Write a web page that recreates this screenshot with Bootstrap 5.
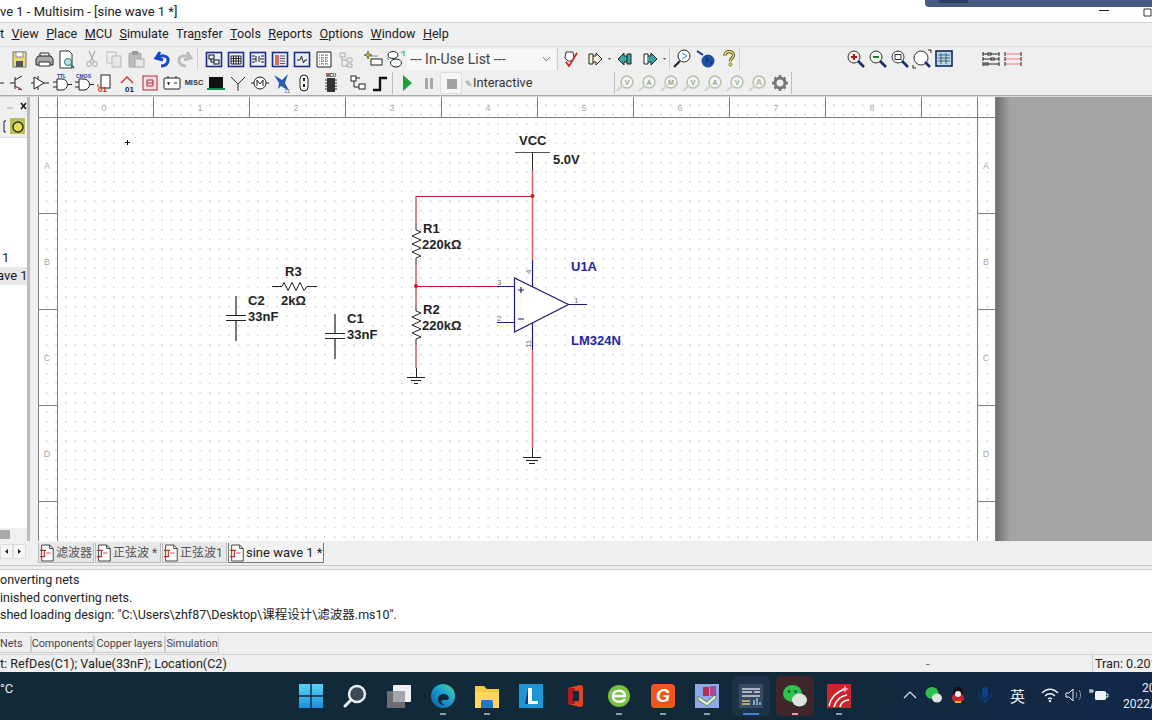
<!DOCTYPE html>
<html lang="en">
<head>
    <meta charset="UTF-8">
    <meta name="viewport" content="width=device-width, initial-scale=1.0">
    <title>Multisim - sine wave 1</title>
    <link href="https://cdn.jsdelivr.net/npm/bootstrap@5.3.0/dist/css/bootstrap.min.css" rel="stylesheet">
    <style>
        body { font-family: Roboto, "Noto Sans CJK SC", sans-serif; font-size: 13px; color: #222; background: #f0f0f0; width: 1152px; height: 720px; overflow: hidden; line-height: 1; }
        .title-row { height: 23px; background: #fff; font-size: 13px; border-bottom: 1px solid #d0d0d0; white-space: nowrap; position: relative; padding-top: 1px; }
        .accent-strip { position: absolute; top: 0; left: 925px; right: 0; height: 7px; background: #47597f; border-bottom-left-radius: 4px; }
        .accent-strip i { display: block; width: 29px; height: 3px; margin-left: 14px; background: #2f3f63; }
        .win-btns { position: absolute; right: 0; top: 6px; }
        .menu-row { height: 24px; background: #f0eff0; border-bottom: 1px solid #dcdcdc; font-size: 12.6px; white-space: nowrap; }
        .menu-row span { margin-right: 7.4px; }
        .tool-row { height: 24px; background: #f0eff0; }
        .tool-row svg { flex: none; display: block; }
        .ti { width: 22px; height: 22px; }
        .tool-sep { width: 1px; height: 22px; background: #cfcfcf; flex: none; }
        .tool-sep2 { width: 1px; height: 22px; background: #bdbdbd; flex: none; }
        .pad1 { margin-left: 1px; } .pad2 { margin-left: 2px; } .pad3 { margin-left: 3px; } .pad4 { margin-left: 4px; } .pad5 { margin-left: 5px; }
        .pad25 { margin-left: 25px; } .pad56 { margin-left: 56px; } .pad105 { margin-left: 105px; }
        .combo-box { width: 149px; height: 21px; background: #f8f8f8; font-size: 14px; color: #444; padding-left: 3px; flex: none; }
        .combo-box svg { margin-left: auto; margin-right: 5px; }
        .mini-ico { width: 7px; height: 22px; }
        .stop-box { width: 22px; height: 22px; border: 1px solid #ddd; background: #f6f6f6; flex: none; }
        .mode-text { font-size: 12.8px; color: #333; white-space: nowrap; width: 93px; flex: none; }
        .mode-pen { font-size: 9px; color: #888; }
        .gv-t { font-family: "Liberation Sans", sans-serif; font-size: 7px; font-weight: 700; fill: #9aa592; text-anchor: middle; }
        .gate-t { font-family: "Liberation Sans", sans-serif; font-size: 5px; font-weight: 700; fill: #2a3fa8; }
        .rule-line { height: 2px; background: #a8a8a8; border-bottom: 1px solid #d8d8d8; }
        .main-area { height: 444px; }
        .side-panel { width: 30px; flex: none; background: #f0eff0; overflow: hidden; border-right: 3px solid #bcbcbc; white-space: nowrap; }
        .side-top { height: 17px; }
        .side-tools { height: 24px; border-bottom: 1px solid #ddd; }
        .side-list { height: 390px; background: #fff; padding-top: 111px; font-size: 13px; }
        .side-list div { height: 18px; padding-top: 2px; padding-left: 2px; }
        .side-list .side-sel { background: #e8e8e8; padding-left: 0; text-indent: -3px; }
        .side-scroll { height: 13px; background: #f0f0f0; }
        .side-scroll i { display: block; width: 10px; height: 9px; margin-top: 2px; background: #a9a9a9; }
        .split-col { width: 8px; flex: none; background: #f0eff0; }
        .sheet { display: block; flex: none; }
        .gray-zone { flex: 1; background: linear-gradient(90deg, #6f6f6f 0, #a5a3a5 14px); }
        .tab-strip { height: 25px; background: #f0eff0; border-bottom: 1px solid #c8c8c8; white-space: nowrap; padding-top: 2px; }
        .tab-nav { width: 38px; flex: none; }
        .tab-arrow { width: 13px; height: 15px; background: #f6f6f6; border: 1px solid #ddd; flex: none; margin-top: 1px; }
        .doc-tab { height: 20px; border: 1px solid #bbb; border-top: 0; background: #e7e7e7; font-size: 12px; color: #555; margin-right: 1px; flex: none; }
        .doc-tab.on { background: #f3f3f3; color: #222; border-color: #777; font-size: 13px; }
        .doc-tab svg { margin-right: 1px; flex: none; }
        .w-a { width: 56px; } .w-b { width: 66px; } .w-c { width: 65px; } .w-d { width: 96px; }
        .out-gap { height: 4px; background: #f0eff0; border-bottom: 1px solid #ccc; }
        .out-box { height: 62px; background: #fff; font-size: 12.5px; padding-top: 2px; white-space: nowrap; }
        .out-box div { height: 17.6px; padding-top: 2px; }
        .bot-tabs { height: 23px; background: #f0eff0; border-top: 1px solid #bbb; border-bottom: 1px solid #d4d4d4; padding-top: 3px; font-size: 10.8px; color: #444; white-space: nowrap; }
        .bot-tab { height: 17px; border: 1px solid #ccc; border-top-color: #eee; background: #f0f0f0; flex: none; }
        .b-a { width: 31px; border-left: 0; } .b-b { width: 63px; } .b-c { width: 71px; } .b-d { width: 54px; }
        .stat-row { height: 17px; background: #f0eff0; font-size: 12.6px; white-space: nowrap; position: relative; padding-top: 3px; }
        .stat-dash { position: absolute; left: 926px; top: 3px; color: #666; }
        .stat-tran { position: absolute; left: 1092px; top: 0; height: 17px; border-left: 1px solid #ccc; padding: 3px 0 0 2px; }
        .task-bar { height: 48px; background: linear-gradient(90deg, #12293a 0, #12293a 70%, #12284a 100%); color: #e8edf2; position: relative; white-space: nowrap; }
        .task-temp { position: absolute; left: 0; top: 10px; font-size: 13px; }
        .task-apps { padding-left: 289px; height: 48px; }
        .task-slot { width: 44px; height: 48px; position: relative; flex: none; }
        .task-slot svg { display: block; margin: 12px auto 0; }
        .task-slot i { position: absolute; left: 19px; top: 41px; width: 6px; height: 2px; background: #8c9aa5; }
        .slot-act { background: #1c3347; border-radius: 5px; height: 40px; margin-top: 4px; width: 38px; margin-left: 3px; margin-right: 3px; }
        .slot-act svg { margin-top: 8px; }
        .slot-act i { top: 37px; left: 11px; width: 16px; background: #3a86c8; }
        .slot-chat { background: #3f2729; border-radius: 5px; height: 40px; margin-top: 4px; width: 38px; margin-left: 3px; margin-right: 3px; }
        .slot-chat svg { margin-top: 8px; }
        .slot-chat i { top: 37px; left: 16px; background: #e79aa0; }
        .tray-ico { position: absolute; top: 14px; }
        .tray-a { left: 902px; } .tray-b { left: 925px; } .tray-c { left: 949px; } .tray-d { left: 976px; } .tray-f { left: 1041px; } .tray-g { left: 1065px; } .tray-h { left: 1089px; }
        .tray-lang { position: absolute; left: 1010px; top: 16px; font-size: 15px; font-family: "Noto Sans CJK SC", sans-serif; }
        .clock-a { position: absolute; left: 1142px; top: 10px; font-size: 12px; }
        .clock-b { position: absolute; left: 1123px; top: 26px; font-size: 12px; }
        .sch { font-family: "Liberation Sans", sans-serif; font-size: 13px; font-weight: 700; fill: #222; }
        .sch-blue { fill: #2424a8; }
        .rul { font-family: "Liberation Sans", sans-serif; font-size: 9px; fill: #a8a8a8; text-anchor: middle; }
        .pin { font-family: "Liberation Sans", sans-serif; font-size: 8px; fill: #777; }
    </style>
</head>
<body class="d-flex flex-column">

<!-- shared toolbar icons -->
<svg width="0" height="0" class="position-absolute">
    <defs>
        <g id="frame"><rect x="3.5" y="4.5" width="15" height="14" fill="#e9eef8" stroke="#1d2d86" stroke-width="1.6"/></g>
        <symbol id="i-save" viewBox="0 0 22 22"><rect x="5" y="4" width="13" height="15" fill="#f0d775" stroke="#777"/><rect x="8" y="4" width="7" height="5" fill="#fff" stroke="#888"/><rect x="8" y="13" width="7" height="6" fill="#555"/></symbol>
        <symbol id="i-print" viewBox="0 0 22 22"><path d="M7 5h9v5H7z" fill="#eee" stroke="#333"/><path d="M3 11l2-3h13l2 3v6H3z" fill="#aaa" stroke="#222"/><path d="M6 14h11v4H6z" fill="#fff" stroke="#333"/></symbol>
        <symbol id="i-preview" viewBox="0 0 22 22"><path d="M5 3h9l3 3v14H5z" fill="#fff" stroke="#333"/><circle cx="13" cy="14" r="3.5" fill="#bfe3e8" stroke="#277"/><path d="M16 17l3 3" stroke="#277" stroke-width="2"/></symbol>
        <symbol id="i-cut" viewBox="0 0 22 22"><path d="M8 3l5 11M14 3L9 14" stroke="#aaa" stroke-width="1.2" fill="none"/><circle cx="8" cy="16" r="2.4" fill="none" stroke="#aaa"/><circle cx="14" cy="16" r="2.4" fill="none" stroke="#aaa"/></symbol>
        <symbol id="i-copy" viewBox="0 0 22 22"><rect x="4" y="4" width="9" height="11" fill="#eee" stroke="#bbb"/><rect x="9" y="8" width="9" height="11" fill="#e6e6e6" stroke="#bbb"/></symbol>
        <symbol id="i-paste" viewBox="0 0 22 22"><rect x="4" y="5" width="12" height="14" rx="1" fill="#bbb" stroke="#aaa"/><rect x="7" y="3" width="6" height="4" fill="#999"/><rect x="10" y="11" width="9" height="8" fill="#e6e6e6" stroke="#aaa"/></symbol>
        <symbol id="i-undo" viewBox="-2 0 22 22"><path d="M8 4L4 10l7 2M5 10c5-4 12-2 11 3s-5 5-7 5" fill="none" stroke="#1747c8" stroke-width="3"/></symbol>
        <symbol id="i-redo" viewBox="0 0 22 22"><path d="M14 4l4 6-7 2M17 10c-5-4-12-2-11 3s5 5 7 5" fill="none" stroke="#bdbdbd" stroke-width="3"/></symbol>
        <symbol id="i-w1" viewBox="0 0 22 22"><use href="#frame"/><rect x="6" y="7" width="5" height="4" fill="none" stroke="#111"/><rect x="11" y="12" width="5" height="4" fill="none" stroke="#111"/><path d="M8 11v3h3" fill="none" stroke="#111"/></symbol>
        <symbol id="i-w2" viewBox="0 0 22 22"><use href="#frame"/><path d="M6 8h10v8H6zM6 10.5h10M6 13h10M8.5 8v8M11 8v8M13.5 8v8" fill="#fff" stroke="#111" stroke-width=".9"/></symbol>
        <symbol id="i-w3" viewBox="0 0 22 22"><use href="#frame"/><path d="M5 11h4M13 11h4M9 8v6M12 8v6M5 8h3M14 8h3M5 14h3M14 14h3" stroke="#222" fill="none"/></symbol>
        <symbol id="i-w4" viewBox="0 0 22 22"><use href="#frame"/><path d="M7 7v10M9 7v10" stroke="#c33" stroke-width="1.4"/><path d="M11 8h5M11 10.5h5M11 13h5M11 15.5h5" stroke="#555"/></symbol>
        <symbol id="i-w5" viewBox="0 0 22 22"><use href="#frame"/><path d="M6 12h3l1.5-4 2 7 1.5-3h2" fill="none" stroke="#222"/></symbol>
        <symbol id="i-w6" viewBox="0 0 22 22"><path d="M4 4h14v15H4z" fill="#fff" stroke="#222"/><path d="M6 7h10M6 10h10M6 13h10M6 16h10M9 7v9M13 7v9" stroke="#555" stroke-dasharray="1 1"/></symbol>
        <symbol id="i-tree" viewBox="0 0 22 22"><path d="M5 5h5v4H5zM12 10h5v4h-5zM12 16h5v3h-5zM7 9v9h5M7 12h5" fill="none" stroke="#aaa"/></symbol>
        <symbol id="i-star" viewBox="0 0 22 22"><path d="M6 3l1 3 3 1-3 1-1 3-1-3-3-1 3-1z" fill="#d8c000" stroke="#333" stroke-width=".6"/><rect x="9" y="11" width="11" height="6" fill="#fff" stroke="#222"/><path d="M8 8h8" stroke="#888"/></symbol>
        <symbol id="i-db" viewBox="0 0 22 22"><ellipse cx="8" cy="7" rx="5" ry="3.5" fill="#fff" stroke="#222"/><ellipse cx="11" cy="15" rx="5.5" ry="4" fill="#fff" stroke="#222"/><path d="M3 9v3M16 5l3-2v5" stroke="#2a7" fill="none"/></symbol>
        <symbol id="i-redchk" viewBox="0 0 22 22"><path d="M7 4h7l1 6-3 3H9L6 10z" fill="#fff" stroke="#333"/><path d="M7 14l3 4 8-13" fill="none" stroke="#c22" stroke-width="1.8"/></symbol>
        <symbol id="i-right" viewBox="0 0 22 22"><path d="M5 6h4v10H5zM9 8h3V5l6 6-6 6v-3H9" fill="#f8f3d8" stroke="#222"/></symbol>
        <symbol id="i-left" viewBox="0 0 22 22"><path d="M17 6h-4v10h4zM13 8h-3V5l-6 6 6 6v-3h3" fill="#3aa6a6" stroke="#222"/></symbol>
        <symbol id="i-right2" viewBox="0 0 22 22"><path d="M5 6h4v10H5z" fill="#fff" stroke="#222"/><path d="M9 8h3V5l6 6-6 6v-3H9" fill="#3aa6a6" stroke="#222"/></symbol>
        <symbol id="i-find" viewBox="0 0 22 22"><circle cx="13" cy="8" r="6" fill="#fff" stroke="#222"/><path d="M9 13l-6 6" stroke="#222" stroke-width="2"/><path d="M11 5l5 3-5 3" stroke="#38a" fill="none"/></symbol>
        <symbol id="i-globe" viewBox="0 0 22 22"><circle cx="13" cy="13" r="6.5" fill="#1c4fa8"/><path d="M10 9l4 2-2 4zM15 13l3 1-2 3z" fill="#143672"/><path d="M2 3l6 4" stroke="#1c2f9c" stroke-width="2"/></symbol>
        <symbol id="i-help" viewBox="-4 -2 28 28"><path d="M6 8c0-7 11-7 11-1 0 4-4 4-4 8" fill="none" stroke="#333" stroke-width="4"/><path d="M6 8c0-7 11-7 11-1 0 4-4 4-4 8" fill="none" stroke="#eede3a" stroke-width="2"/><circle cx="13" cy="19" r="2" fill="#eede3a" stroke="#333" stroke-width=".7"/></symbol>
        <symbol id="i-zin" viewBox="0 0 22 22"><circle cx="9" cy="9" r="6" fill="#fbeaea" stroke="#333"/><path d="M9 6v6M6 9h6" stroke="#a01c1c" stroke-width="2"/><path d="M13 13l6 6" stroke="#1c2f6c" stroke-width="2.6"/></symbol>
        <symbol id="i-zout" viewBox="0 0 22 22"><circle cx="9" cy="9" r="6" fill="#eaf7ea" stroke="#333"/><path d="M6 9h6" stroke="#1b7a2a" stroke-width="2"/><path d="M13 13l6 6" stroke="#1c2f6c" stroke-width="2.6"/></symbol>
        <symbol id="i-zarea" viewBox="0 0 22 22"><circle cx="9" cy="9" r="6" fill="#fff" stroke="#333"/><rect x="6" y="6.5" width="6" height="5" fill="none" stroke="#333"/><path d="M13 13l6 6" stroke="#1c2f6c" stroke-width="2.6"/></symbol>
        <symbol id="i-zfit" viewBox="0 0 22 22"><circle cx="10" cy="10" r="7" fill="#fff" stroke="#333"/><path d="M14 14l5 5" stroke="#1c2f6c" stroke-width="2.6"/><path d="M2 17v3h3M17 2h3v3" fill="none" stroke="#222"/></symbol>
        <symbol id="i-zgrid" viewBox="0 0 22 22"><rect x="3" y="3" width="16" height="15" fill="#b8dbe8" stroke="#16265e" stroke-width="1.6"/><path d="M5 7h12M5 10h12M5 13h12M8 5v11M13 5v11" stroke="#345" stroke-width=".8"/></symbol>
        <symbol id="i-bus1" viewBox="0 0 22 22"><path d="M3 6h16M3 11h16M3 16h16" stroke="#222"/><path d="M3 4v4M19 4v4M3 9v4M19 9v4M3 14v4M19 14v4" stroke="#222"/><rect x="8" y="5" width="3" height="2" fill="#fff" stroke="#222"/><rect x="11" y="10" width="3" height="2" fill="#fff" stroke="#222"/><rect x="5" y="15" width="3" height="2" fill="#fff" stroke="#222"/></symbol>
        <symbol id="i-bus2" viewBox="0 0 22 22"><path d="M3 6h16M3 11h16M3 16h16" stroke="#e77"/><path d="M3 4v4M19 4v4M3 9v4M19 9v4M3 14v4M19 14v4" stroke="#222"/></symbol>
        <symbol id="i-tran" viewBox="0 0 22 22"><path d="M8 5v12M3 11h5M8 8l7-4M8 14l7 4" fill="none" stroke="#222"/><path d="M12 15l3 3-4 0z" fill="#a33"/></symbol>
        <symbol id="i-gate" viewBox="0 0 22 22"><path d="M6 7h5a5.500 5.500 0 0 1 0 11H6zM2 10h4M2 15h4M17 12.500h4" fill="#fff" stroke="#222"/></symbol>
        <symbol id="i-tri" viewBox="0 0 22 22"><path d="M5 5l10 6-10 6zM2 11h3M15 11h5M9 4v3M9 15v3" fill="#fff" stroke="#222"/></symbol>
        <symbol id="i-adc" viewBox="0 0 22 22"><rect x="6" y="3" width="9" height="13" fill="#fff" stroke="#222"/><text x="3" y="20" font-size="8" font-weight="700" fill="#c22" font-family="Liberation Sans">01</text><path d="M3 15v-3" stroke="#c22"/></symbol>
        <symbol id="i-mix" viewBox="0 0 22 22"><path d="M4 11l6-6 6 6" fill="none" stroke="#c33" stroke-width="1.4"/><text x="8" y="20" font-size="8" font-weight="700" fill="#222" font-family="Liberation Sans">01</text></symbol>
        <symbol id="i-ind" viewBox="0 0 22 22"><rect x="4" y="4" width="14" height="14" fill="#f6dede" stroke="#a03040"/><path d="M8 8h6v6H8zM8 11h6" fill="none" stroke="#a03040"/></symbol>
        <symbol id="i-pow" viewBox="0 0 22 22"><rect x="3" y="6" width="16" height="11" rx="1" fill="#fff" stroke="#222"/><path d="M7 4v2M15 4v2M6 11h3M7.500 10v3M13 11h3" stroke="#222"/></symbol>
        <symbol id="i-misc" viewBox="0 0 22 22"><text x="11" y="13" text-anchor="middle" font-size="7.500" font-weight="700" fill="#333" font-family="Liberation Sans">MISC</text></symbol>
        <symbol id="i-board" viewBox="0 0 22 22"><rect x="4" y="5" width="14" height="11" fill="#111"/><path d="M2 17h18" stroke="#198a4a" stroke-width="2"/></symbol>
        <symbol id="i-ant" viewBox="0 0 22 22"><path d="M4 5l7 7 7-7M11 12v7" fill="none" stroke="#333"/></symbol>
        <symbol id="i-motor" viewBox="0 0 22 22"><circle cx="11" cy="11" r="6" fill="#fff" stroke="#222"/><path d="M2 11h3M17 11h3M8 14V8l3 4 3-4v6" fill="none" stroke="#222"/></symbol>
        <symbol id="i-wave" viewBox="0 0 22 22"><path d="M3 3l8 5 6-6-3 9 4 8-8-5-3 3 1-6z" fill="#2a5fb0"/><text x="13" y="21" font-size="6" fill="#777" font-family="Liberation Sans">11</text></symbol>
        <symbol id="i-caps" viewBox="0 0 22 22"><rect x="7" y="3" width="8" height="16" rx="4" fill="#fff" stroke="#222"/><path d="M11 6v3M11 12v3" stroke="#222" stroke-width="2"/></symbol>
        <symbol id="i-chip" viewBox="0 0 22 22"><rect x="7" y="6" width="8" height="14" fill="#333"/><path d="M5 8h2M5 11h2M5 14h2M5 17h2M15 8h2M15 11h2M15 14h2M15 17h2" stroke="#333"/><text x="11" y="5" text-anchor="middle" font-size="4.500" font-weight="700" fill="#222" font-family="Liberation Sans">MCU</text></symbol>
        <symbol id="i-hier" viewBox="0 0 22 22"><rect x="4" y="4" width="5" height="5" fill="#fff" stroke="#222"/><rect x="12" y="12" width="6" height="5" fill="#fff" stroke="#222"/><path d="M9 6h4M7 9v6h5" stroke="#222" fill="none"/></symbol>
        <symbol id="i-step" viewBox="0 0 22 22"><path d="M4 18h7V6h7" fill="none" stroke="#111" stroke-width="2.400"/></symbol>
        <symbol id="i-play" viewBox="0 0 22 22"><path d="M7 3l9 8-9 8z" fill="#1fa03c"/></symbol>
        <symbol id="i-pause" viewBox="0 0 22 22"><path d="M7 6h3v11H7zM12 6h3v11h-3z" fill="#a8a8a8"/></symbol>
        <symbol id="i-stop" viewBox="0 0 22 22"><rect x="6" y="6" width="10" height="10" fill="#a2a2a2"/></symbol>
        <symbol id="i-gv" viewBox="0 0 22 22"><circle cx="12" cy="10" r="6" fill="#f4f4f0" stroke="#b7bfae" stroke-width="1.500"/><path d="M2 19c2-3 4-4 6-5" stroke="#cfd8c6" stroke-width="2"/></symbol>
        <symbol id="i-gear" viewBox="0 0 22 22"><circle cx="11" cy="11" r="5" fill="none" stroke="#777" stroke-width="3"/><path d="M11 3v3M11 16v3M3 11h3M16 11h3M5.500 5.500l2 2M14.500 14.500l2 2M16.500 5.500l-2 2M7.500 14.500l-2 2" stroke="#777" stroke-width="2.500"/></symbol>
        <symbol id="i-doc" viewBox="2 1 18 20"><path d="M5 2h9l4 4v14H5z" fill="#fff" stroke="#333"/><path d="M14 2v4h4" fill="none" stroke="#333"/><path d="M3 8h7M8 8v7M3 15h6" stroke="#b33" stroke-width="1.300" fill="none"/><path d="M10 11h5" stroke="#c33"/></symbol>
    </defs>
</svg>

<!-- title bar -->
<div class="title-row d-flex align-items-center flex-none">
    <span>ve 1 - Multisim - [sine wave 1 *]</span>
    <div class="accent-strip"><i></i></div>
    <svg class="win-btns" width="60" height="12" viewBox="0 0 60 12"><path d="M7 4.500h10" stroke="#222"/><path d="M52 3h7v7h-7z" fill="#fff" stroke="#333"/></svg>
</div>

<!-- menu -->
<div class="menu-row d-flex align-items-center">
    <span>t</span>
    <span><u>V</u>iew</span><span><u>P</u>lace</span><span><u>M</u>CU</span><span><u>S</u>imulate</span><span>Tra<u>n</u>sfer</span><span><u>T</u>ools</span><span><u>R</u>eports</span><span><u>O</u>ptions</span><span><u>W</u>indow</span><span><u>H</u>elp</span>
</div>

<!-- main toolbar -->
<div class="tool-row d-flex align-items-center">
    <svg width="6" height="22" viewBox="16 0 6 22"><use href="#i-undo"/></svg>
    <svg class="ti pad2"><use href="#i-save"/></svg>
    <svg class="ti pad3"><use href="#i-print"/></svg>
    <svg class="ti"><use href="#i-preview"/></svg>
    <svg class="ti pad4"><use href="#i-cut"/></svg>
    <svg class="ti"><use href="#i-copy"/></svg>
    <svg class="ti"><use href="#i-paste"/></svg>
    <svg class="ti pad3"><use href="#i-undo"/></svg>
    <svg class="ti pad1"><use href="#i-redo"/></svg>
    <div class="tool-sep pad2"></div>
    <svg class="ti pad5"><use href="#i-w1"/></svg>
    <svg class="ti"><use href="#i-w2"/></svg>
    <svg class="ti"><use href="#i-w3"/></svg>
    <svg class="ti"><use href="#i-w4"/></svg>
    <svg class="ti"><use href="#i-w5"/></svg>
    <svg class="ti"><use href="#i-w6"/></svg>
    <svg class="ti"><use href="#i-tree"/></svg>
    <svg class="ti pad5"><use href="#i-star"/></svg>
    <svg class="ti pad1"><use href="#i-db"/></svg>
    <div class="combo-box d-flex align-items-center">--- In-Use List ---
        <svg width="9" height="6" viewBox="0 0 9 6"><path d="M1 1l3.500 4L8 1" fill="none" stroke="#777"/></svg>
    </div>
    <div class="tool-sep pad1"></div>
    <svg class="ti pad1"><use href="#i-redchk"/></svg>
    <svg class="ti pad3"><use href="#i-right"/></svg>
    <svg class="mini-ico" viewBox="0 0 7 22"><path d="M2 10h3l-1.500 2z" fill="#555"/></svg>
    <svg class="ti pad1"><use href="#i-left"/></svg>
    <svg class="ti pad3"><use href="#i-right2"/></svg>
    <svg class="mini-ico" viewBox="0 0 7 22"><path d="M2 10h3l-1.500 2z" fill="#555"/></svg>
    <div class="tool-sep pad1"></div>
    <svg class="ti pad1"><use href="#i-find"/></svg>
    <svg class="ti pad2"><use href="#i-globe"/></svg>
    <svg class="ti"><use href="#i-help"/></svg>
    <div class="tool-sep"></div>
    <svg class="ti pad105"><use href="#i-zin"/></svg>
    <svg class="ti"><use href="#i-zout"/></svg>
    <svg class="ti"><use href="#i-zarea"/></svg>
    <svg class="ti"><use href="#i-zfit"/></svg>
    <svg class="ti"><use href="#i-zgrid"/></svg>
    <svg class="ti pad25"><use href="#i-bus1"/></svg>
    <svg class="ti"><use href="#i-bus2"/></svg>
</div>

<!-- component toolbar -->
<div class="tool-row d-flex align-items-center">
    <svg width="7" height="22" viewBox="0 0 7 22"><path d="M0 11h4" stroke="#333"/></svg>
    <svg class="ti"><use href="#i-tran"/></svg>
    <svg class="ti"><use href="#i-tri"/></svg>
    <svg class="ti" viewBox="0 0 22 22"><use href="#i-gate"/><text class="gate-t" x="6" y="6">TTL</text></svg>
    <svg class="ti" viewBox="0 0 22 22"><use href="#i-gate"/><text class="gate-t" x="3" y="6">CMOS</text></svg>
    <svg class="ti"><use href="#i-adc"/></svg>
    <svg class="ti"><use href="#i-mix"/></svg>
    <svg class="ti"><use href="#i-ind"/></svg>
    <svg class="ti"><use href="#i-pow"/></svg>
    <svg class="ti"><use href="#i-misc"/></svg>
    <svg class="ti"><use href="#i-board"/></svg>
    <svg class="ti"><use href="#i-ant"/></svg>
    <svg class="ti"><use href="#i-motor"/></svg>
    <svg class="ti"><use href="#i-wave"/></svg>
    <svg class="ti"><use href="#i-caps"/></svg>
    <svg class="ti pad5"><use href="#i-chip"/></svg>
    <svg class="ti pad5"><use href="#i-hier"/></svg>
    <svg class="ti"><use href="#i-step"/></svg>
    <div class="tool-sep2 pad1"></div>
    <svg class="ti pad3"><use href="#i-play"/></svg>
    <svg class="ti"><use href="#i-pause"/></svg>
    <div class="stop-box d-flex"><svg class="ti"><use href="#i-stop"/></svg></div>
    <div class="mode-text pad3"><span class="mode-pen">✎</span>Interactive</div>
    <div class="tool-sep2 pad56"></div>
    <svg class="ti" viewBox="0 0 22 22"><use href="#i-gv"/><text class="gv-t" x="12" y="12.500">V</text></svg>
    <svg class="ti" viewBox="0 0 22 22"><use href="#i-gv"/><text class="gv-t" x="12" y="12.500">A</text></svg>
    <svg class="ti" viewBox="0 0 22 22"><use href="#i-gv"/><text class="gv-t" x="12" y="12.500">M</text></svg>
    <svg class="ti" viewBox="0 0 22 22"><use href="#i-gv"/><text class="gv-t" x="12" y="12.500">V</text></svg>
    <svg class="ti" viewBox="0 0 22 22"><use href="#i-gv"/><text class="gv-t" x="12" y="12.500">A</text></svg>
    <svg class="ti" viewBox="0 0 22 22"><use href="#i-gv"/><text class="gv-t" x="12" y="12.500">V</text></svg>
    <svg class="ti" viewBox="0 0 22 22"><use href="#i-gv"/><path d="M9 12h2V8h2v4h2" fill="none" stroke="#9aa592"/></svg>
    <svg class="ti"><use href="#i-gear"/></svg>
    <div class="tool-sep2"></div>
</div>
<div class="rule-line"></div>

<!-- workspace -->
<div class="main-area d-flex">
    <div class="side-panel">
        <div class="side-top d-flex align-items-center">
            <svg width="27" height="14" viewBox="0 0 27 14"><path d="M7 9h6" stroke="#aaa"/><path d="M21 4l5 6M26 4l-5 6" stroke="#111" stroke-width="1.500"/></svg>
        </div>
        <div class="side-tools d-flex align-items-center">
            <svg width="27" height="22" viewBox="0 0 27 22"><path d="M6 6H4v11h2" fill="none" stroke="#222"/><rect x="10" y="3" width="15" height="16" rx="1" fill="#b9bd5a"/><circle cx="18" cy="12" r="5" fill="#e8dc50" stroke="#333" stroke-width="1.500"/></svg>
        </div>
        <div class="side-list">
            <div>1</div>
            <div class="side-sel">ave 1</div>
        </div>
        <div class="side-scroll"><i></i></div>
    </div>
    <div class="split-col"></div>
    <svg class="sheet" width="958" height="444" viewBox="38 97 958 444">
        <defs>
            <pattern id="dots" x="65" y="133" width="9.6" height="9.6" patternUnits="userSpaceOnUse"><rect width="1.500" height="1.500" fill="#cdcdcd"/></pattern>
        </defs>
        <rect x="38" y="97" width="958" height="444" fill="#fff"/>
        <rect x="38" y="97" width="958" height="444" fill="url(#dots)"/>
        <!-- sheet frame -->
        <g stroke="#808080" fill="none">
            <path d="M38.500 97v444M57.500 97v444M977.500 97v444M995.500 97v444M38 117.500h958"/>
            <path d="M153.500 97v20M249.500 97v20M345.500 97v20M441.500 97v20M537.500 97v20M633.500 97v20M729.500 97v20M825.500 97v20M921.500 97v20"/>
            <path d="M38 213.500h19M38 309.500h19M38 405.500h19M38 501.500h19M977 213.500h19M977 309.500h19M977 405.500h19M977 501.500h19"/>
        </g>
        <g class="rul">
            <text x="104" y="111">0</text><text x="200" y="111">1</text><text x="296" y="111">2</text><text x="392" y="111">3</text><text x="488" y="111">4</text><text x="584" y="111">5</text><text x="680" y="111">6</text><text x="776" y="111">7</text><text x="872" y="111">8</text>
            <text x="47" y="169">A</text><text x="47" y="265">B</text><text x="47" y="361">C</text><text x="47" y="457">D</text>
            <text x="986" y="169">A</text><text x="986" y="265">B</text><text x="986" y="361">C</text><text x="986" y="457">D</text>
        </g>
        <path d="M125 142.500h5M127.500 140v5" stroke="#111"/>

        <!-- wires -->
        <g fill="none" stroke="#b82028" stroke-width="1.200">
            <path d="M416 196.500H532"/>
            <path d="M416 286.500H497"/>
        </g>
        <g fill="none" stroke="#d4606c" stroke-width="1.500">
            <path d="M532.500 170V260M532.500 350V448"/>
            <path d="M416 224V196M416 264V305M416 345V368"/>
        </g>
        <circle cx="532.500" cy="196" r="2" fill="#c81e28"/>
        <circle cx="416" cy="286" r="2" fill="#c81e28"/>

        <!-- VCC -->
        <path d="M515 152.500h35" stroke="#555"/>
        <path d="M532.500 152v18" stroke="#222"/>
        <text class="sch" x="519" y="145">VCC</text>
        <text class="sch" x="553" y="164">5.0V</text>

        <!-- R1, R2 -->
        <path d="M416 224V230l5 2-9 4 9 4-9 4 9 4-9 4 9 4-5 2V264" fill="none" stroke="#222"/>
        <path d="M416 305V311l5 2-9 4 9 4-9 4 9 4-9 4 9 4-5 2V345" fill="none" stroke="#222"/>
        <text class="sch" x="423" y="233">R1</text>
        <text class="sch" x="422" y="249">220kΩ</text>
        <text class="sch" x="423" y="314">R2</text>
        <text class="sch" x="422" y="330">220kΩ</text>

        <!-- R2 ground -->
        <path d="M416.500 368v9M407 377.500h18M411 380.500h10M414 383.500h4" fill="none" stroke="#222"/>

        <!-- R3 -->
        <path d="M272 286.500h10l2-4 4 8 4-8 4 8 4-8 4 8 3-4h10" fill="none" stroke="#222"/>
        <text class="sch" x="285" y="276">R3</text>
        <text class="sch" x="281" y="305">2kΩ</text>

        <!-- C2, C1 -->
        <path d="M236 296v19M236 320v21M226 315.500h20M226 320.500h20" fill="none" stroke="#222" stroke-width="1.200"/>
        <path d="M335 314v19M335 339v20M325 333.500h20M325 338.500h20" fill="none" stroke="#222" stroke-width="1.200"/>
        <text class="sch" x="248" y="305">C2</text>
        <text class="sch" x="248" y="321">33nF</text>
        <text class="sch" x="347" y="323">C1</text>
        <text class="sch" x="347" y="339">33nF</text>

        <!-- op amp -->
        <g fill="none" stroke="#1c1c7c" stroke-width="1.200">
            <path d="M514.500 278V332L568.500 304.500Z" fill="#fff"/>
            <path d="M497 286.500h17M497 322.500h17M568 304.500h19M532.500 260v27M532.500 323v27"/>
            <path d="M518 290h6M521 287v6M518 319h6"/>
        </g>
        <text class="pin" x="497" y="285">3</text>
        <text class="pin" x="497" y="321">2</text>
        <text class="pin" x="574" y="303">1</text>
        <text class="pin" transform="rotate(-90 531 274)" x="531" y="274">4</text>
        <text class="pin" transform="rotate(-90 531 348)" x="531" y="348">11</text>
        <text class="sch sch-blue" x="571" y="271">U1A</text>
        <text class="sch sch-blue" x="571" y="345">LM324N</text>

        <!-- VEE ground -->
        <path d="M532.500 448v9M523 457.500h18M526 460.500h12M529 463.500h6" fill="none" stroke="#222"/>
    </svg>
    <div class="gray-zone"></div>
</div>

<!-- sheet tabs -->
<div class="tab-strip d-flex">
    <div class="tab-nav d-flex align-items-start">
        <div class="tab-arrow d-flex align-items-center justify-content-center"><svg width="5" height="7"><path d="M4 1L1 3.500 4 6z" fill="#222"/></svg></div>
        <div class="tab-arrow d-flex align-items-center justify-content-center"><svg width="5" height="7"><path d="M1 1l3 2.500L1 6z" fill="#222"/></svg></div>
    </div>
    <div class="doc-tab w-a d-flex align-items-center"><svg width="16" height="18"><use href="#i-doc"/></svg>滤波器</div>
    <div class="doc-tab w-b d-flex align-items-center"><svg width="16" height="18"><use href="#i-doc"/></svg>正弦波 *</div>
    <div class="doc-tab w-c d-flex align-items-center"><svg width="16" height="18"><use href="#i-doc"/></svg>正弦波1</div>
    <div class="doc-tab on w-d d-flex align-items-center"><svg width="16" height="18"><use href="#i-doc"/></svg>sine wave 1 *</div>
</div>
<div class="out-gap"></div>

<!-- output pane -->
<div class="out-box">
    <div>onverting nets</div>
    <div>inished converting nets.</div>
    <div>shed loading design: "C:\Users\zhf87\Desktop\课程设计\滤波器.ms10".</div>
</div>
<div class="bot-tabs d-flex">
    <div class="bot-tab b-a d-flex align-items-center ps-0">Nets</div>
    <div class="bot-tab b-b d-flex align-items-center justify-content-center">Components</div>
    <div class="bot-tab b-c d-flex align-items-center justify-content-center">Copper layers</div>
    <div class="bot-tab b-d d-flex align-items-center justify-content-center">Simulation</div>
</div>
<div class="stat-row">
    <span>t: RefDes(C1); Value(33nF); Location(C2)</span>
    <span class="stat-dash">-</span>
    <span class="stat-tran">Tran: 0.201</span>
</div>

<!-- taskbar -->
<div class="task-bar">
    <span class="task-temp">°C</span>
    <div class="task-apps d-flex">
        <div class="task-slot"><svg width="24" height="24" viewBox="0 0 24 24"><defs><linearGradient id="win" x1="0" y1="0" x2="0" y2="1"><stop offset="0" stop-color="#5cd2f5"/><stop offset="1" stop-color="#1a8fe0"/></linearGradient></defs><path d="M0 0h11.300v11.300H0zM12.700 0H24v11.300H12.700zM0 12.700h11.300V24H0zM12.700 12.700H24V24H12.700z" fill="url(#win)"/></svg></div>
        <div class="task-slot"><svg width="24" height="24" viewBox="0 0 24 24"><circle cx="14" cy="10" r="8" fill="#3c4a54" stroke="#e9eef0" stroke-width="2.400"/><path d="M8 16l-6 6" stroke="#e9eef0" stroke-width="3" stroke-linecap="round"/></svg></div>
        <div class="task-slot"><svg width="24" height="24" viewBox="0 0 24 24"><rect x="6" y="1" width="18" height="17" rx="1" fill="#eef0f2"/><rect x="0" y="7" width="18" height="17" rx="1" fill="#6b6f72"/><rect x="6" y="7" width="12" height="11" fill="#a4a7a9"/></svg></div>
        <div class="task-slot"><svg width="24" height="24" viewBox="0 0 24 24"><defs><linearGradient id="edge" x1="0" y1="1" x2="1" y2="0"><stop offset="0" stop-color="#0c59a4"/><stop offset=".6" stop-color="#1fa6d8"/><stop offset="1" stop-color="#52d67a"/></linearGradient></defs><circle cx="12" cy="12" r="12" fill="url(#edge)"/><path d="M7 15c0-6 10-7 11-1 0 2-3 2-6 2-3 0-2 4 2 5-5 1-7-3-7-6z" fill="#12293a"/></svg><i></i></div>
        <div class="task-slot"><svg width="24" height="24" viewBox="0 0 24 24"><path d="M0 2h9l3 3h12v19H0z" fill="#f7c93e"/><path d="M0 8h24v16H0z" fill="#fbd75b"/><path d="M7 16h10l1 2v6H6v-6z" fill="#1e78c8"/></svg><i></i></div>
        <div class="task-slot"><svg width="24" height="24" viewBox="0 0 24 24"><rect width="24" height="24" fill="#1c96d4"/><path d="M9 4h4v13h6v3H9z" fill="#fff"/><path d="M9 4v16H6z" fill="#123a80"/></svg></div>
        <div class="task-slot"><svg width="24" height="24" viewBox="0 0 24 24"><path d="M5 4l12-3 3 1v20l-3 1-12-3z" fill="#e0451f"/><path d="M5 4l7 0v16H5z" fill="#a81c1c"/><path d="M10 7h6v10h-6z" fill="#12293a"/></svg></div>
        <div class="task-slot"><svg width="24" height="24" viewBox="0 0 24 24"><circle cx="12" cy="12" r="11" fill="#7ac142"/><path d="M6 12h12c0-7-12-7-12 0s9 7 12 3" fill="none" stroke="#fff" stroke-width="2.400"/></svg><i></i></div>
        <div class="task-slot"><svg width="24" height="24" viewBox="0 0 24 24"><rect width="24" height="24" rx="4" fill="#f0561c"/><text x="12" y="18" text-anchor="middle" font-family="Liberation Sans" font-weight="700" font-style="italic" font-size="18" fill="#fff">G</text></svg><i></i></div>
        <div class="task-slot"><svg width="24" height="24" viewBox="0 0 24 24"><rect width="24" height="24" fill="#8fa8e8"/><path d="M3 16l9 6 9-8v-4l-9 8-9-6z" fill="#e8f0d8" stroke="#5a8a5a"/><rect x="8" y="3" width="6" height="9" fill="#b43050"/><rect x="15" y="2" width="6" height="10" fill="#a04aa0"/></svg><i></i></div>
        <div class="task-slot slot-act"><svg width="24" height="24" viewBox="0 0 24 24"><rect width="24" height="24" rx="1" fill="#394a64"/><path d="M3 5h18M3 8h10M15 8h6M3 12h18" stroke="#d0d6e0" stroke-width="1.500"/><path d="M3 17h8M3 20h8" stroke="#e0c080" stroke-width="1.500"/><path d="M15 21v-5M18 21v-7M21 21v-3" stroke="#9cc0e0" stroke-width="1.500"/></svg><i></i></div>
        <div class="task-slot slot-chat"><svg width="24" height="24" viewBox="0 0 24 24"><ellipse cx="9.500" cy="9.500" rx="9.500" ry="8.500" fill="#2fc14f"/><ellipse cx="16.500" cy="16" rx="7.500" ry="6.500" fill="#dfe3e0"/><circle cx="6" cy="7.500" r="1.200" fill="#0b4a1c"/><circle cx="12.500" cy="7.500" r="1.200" fill="#0b4a1c"/></svg><i></i></div>
        <div class="task-slot"><svg width="24" height="24" viewBox="0 0 24 24"><rect width="24" height="24" fill="#c9252c"/><path d="M2 22C4 12 12 7 18 5M7 23c2-7 7-11 13-12M13 23c1-4 4-7 9-7" fill="none" stroke="#fff" stroke-width="1.600"/><path d="M18 1l1 3 3 1-3 1-1 3-1-3-3-1 3-1z" fill="#fbd"/></svg><i></i></div>
    </div>
    <svg class="tray-ico tray-a" width="16" height="18" viewBox="0 0 16 18"><path d="M2 12l6-6 6 6" fill="none" stroke="#dfe6ec" stroke-width="1.200"/></svg>
    <svg class="tray-ico tray-b" width="18" height="18" viewBox="0 0 18 18"><ellipse cx="7" cy="7" rx="6.500" ry="6" fill="#2fc14f"/><ellipse cx="12" cy="12" rx="5" ry="4.500" fill="#dfe3e0"/></svg>
    <svg class="tray-ico tray-c" width="18" height="18" viewBox="0 0 18 18"><ellipse cx="9" cy="6" rx="5" ry="5.500" fill="#111"/><ellipse cx="9" cy="12" rx="6" ry="5" fill="#c9252c"/><ellipse cx="9" cy="8" rx="3" ry="3" fill="#eee"/><path d="M6 16h6" stroke="#e8b020" stroke-width="2"/></svg>
    <svg class="tray-ico tray-d" width="18" height="18" viewBox="0 0 18 18"><rect x="6" y="1" width="6" height="11" rx="3" fill="#123f8c"/><path d="M3 8c0 8 12 8 12 0M9 14v3" fill="none" stroke="#123f8c" stroke-width="1.500"/></svg>
    <span class="tray-lang">英</span>
    <svg class="tray-ico tray-f" width="18" height="18" viewBox="0 0 18 18"><path d="M1 7c5-5 11-5 16 0M4 10c3-3 7-3 10 0M7 13c1-1 3-1 4 0" fill="none" stroke="#eef2f5" stroke-width="1.300"/><circle cx="9" cy="15" r="1.200" fill="#eef2f5"/></svg>
    <svg class="tray-ico tray-g" width="18" height="18" viewBox="0 0 18 18"><path d="M1 7h3l4-4v12l-4-4H1z" fill="none" stroke="#e6ecf0"/><path d="M11 6c1 2 1 4 0 6M14 4c2 3 2 7 0 10" fill="none" stroke="#8e9aa4"/></svg>
    <svg class="tray-ico tray-h" width="20" height="18" viewBox="0 0 20 18"><rect x="6" y="5" width="11" height="9" rx="1.500" fill="#eef2f5"/><path d="M17 8h2v3h-2M1 5h4M1 3v4M3 3v4" stroke="#eef2f5" fill="none"/></svg>
    <span class="clock-a">20</span>
    <span class="clock-b">2022/</span>
</div>

</body>
</html>
